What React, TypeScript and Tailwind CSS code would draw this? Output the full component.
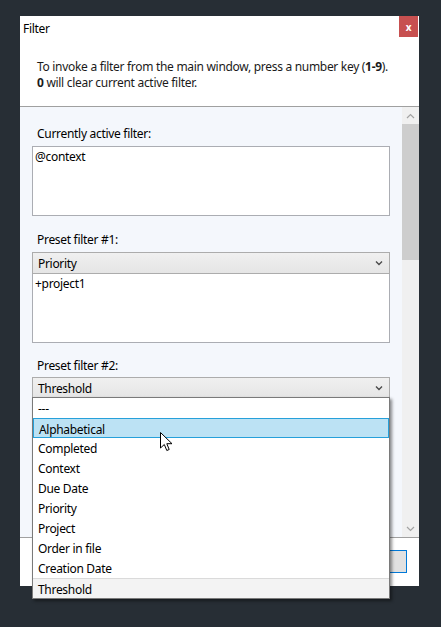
import React from 'react';

// ── Filter dialog with an open combo-box dropdown ──────────────
const FONT = { fontFamily: '"Noto Sans", "Open Sans", sans-serif' };

const OPTIONS = [
  '---',
  'Alphabetical',
  'Completed',
  'Context',
  'Due Date',
  'Priority',
  'Project',
  'Order in file',
  'Creation Date',
  'Threshold',
];

function Chevron() {
  return (
    <svg width="8" height="6" viewBox="0 0 8 6" className="shrink-0">
      <path d="M1 1.5 L4 4.5 L7 1.5" fill="none" stroke="#4a4a4a" strokeWidth="1.4" />
    </svg>
  );
}

function Combo({ value }: { value: string }) {
  return (
    <div className="flex h-[22px] items-center justify-between border border-[#acacac] bg-gradient-to-b from-[#f0f0f0] to-[#e5e5e5] pl-[5px] pr-[6px]">
      <span className="pt-[1px]">{value}</span>
      <Chevron />
    </div>
  );
}

function TextArea({ text, h, topBorder = true }: { text: string; h: string; topBorder?: boolean }) {
  return (
    <div
      className={[
        'border-x border-b border-[#abadb3] bg-white px-[2px] pt-[1px] leading-[18px]',
        topBorder ? 'border-t' : 'border-t-0',
        h,
      ].join(' ')}
    >
      {text}
    </div>
  );
}

function Cursor() {
  return (
    <svg width="14" height="21" viewBox="0 0 14 21" className="absolute left-[160px] top-[432px]">
      <path
        d="M0.5 0.5 L0.5 16 L4.3 12.5 L6.8 18.5 L9.2 17.5 L6.8 11.7 L12 11.7 Z"
        fill="#ffffff"
        stroke="#000000"
        strokeWidth="1"
      />
    </svg>
  );
}

export default function App() {
  return (
    <div
      className="relative h-[627px] w-[441px] overflow-hidden bg-[#272e35] pl-[20px] pt-[16px] text-[12px] tracking-[-0.3px] text-[#000]"
      style={FONT}
    >
      {/* Window */}
      <div className="flex h-[570px] w-[399px] flex-col bg-white">
        {/* Title bar */}
        <div className="flex h-[21px] items-start justify-between">
          <span className="pl-[3px] pt-[4px] leading-[18px]">Filter</span>
          <button className="mr-[1px] flex h-[21px] w-[19px] items-center justify-center bg-[#c75050] text-[10px] font-bold leading-none text-white">
            x
          </button>
        </div>

        {/* Instructions */}
        <div className="h-[70px] whitespace-nowrap border-b border-[#a0a0a0] px-[17px] pt-[22px] leading-[16px] text-[#1a1a1a]">
          <div>
            To invoke a filter from the main window, press a number key (<b>1-9</b>).
          </div>
          <div>
            <b>0</b> will clear current active filter.
          </div>
        </div>

        {/* Scrollable content */}
        <div className="flex h-[430px]">
          <div className="flex flex-1 flex-col bg-[#f4f7fc] px-[12px] pt-[19px]">
            <div className="pl-[5px] leading-[16px]">Currently active filter:</div>
            <div className="mt-[4px]">
              <TextArea text="@context" h="h-[70px]" />
            </div>

            <div className="mt-[16px] pl-[5px] leading-[16px]">Preset filter #1:</div>
            <div className="mt-[4px]">
              <Combo value="Priority" />
              <TextArea text="+project1" h="h-[69px]" topBorder={false} />
            </div>

            <div className="mt-[15px] pl-[5px] leading-[16px]">Preset filter #2:</div>
            <div className="mt-[3px]">
              <Combo value="Threshold" />
            </div>
          </div>

          {/* Scrollbar */}
          <div className="flex w-[17px] flex-col bg-[#f0f0f0]">
            <div className="flex h-[17px] items-center justify-center">
              <svg width="9" height="6" viewBox="0 0 9 6">
                <path d="M1 5 L4.5 1.5 L8 5" fill="none" stroke="#a3a3a3" strokeWidth="1.2" />
              </svg>
            </div>
            <div className="h-[136px] bg-[#cdcdcd]" />
            <div className="flex-1" />
            <div className="flex h-[17px] items-center justify-center">
              <svg width="9" height="6" viewBox="0 0 9 6">
                <path d="M1 1 L4.5 4.5 L8 1" fill="none" stroke="#a3a3a3" strokeWidth="1.2" />
              </svg>
            </div>
          </div>
        </div>

        {/* Footer */}
        <div className="flex flex-1 items-start justify-end border-t border-[#a0a0a0] bg-white pr-[12px] pt-[12px]">
          <div className="h-[23px] w-[75px] border border-[#0078d7] bg-[#e1e1e1]" />
        </div>
      </div>

      {/* Open dropdown */}
      <div className="absolute left-[32px] top-[397px] w-[358px] border border-[#7a7a7a] bg-white shadow-[2px_2px_3px_rgba(0,0,0,0.45)]">
        {OPTIONS.map((opt) => {
          const selected = opt === 'Alphabetical';
          const current = opt === 'Threshold';
          return (
            <div
              key={opt}
              className={[
                'h-[20px] pl-[5px] pt-[1px] leading-[19px]',
                selected ? 'border border-[#26a0da] bg-[#bce2f4] pl-[4px] pt-0 leading-[18px]' : '',
                current ? 'border-t border-[#dadada] bg-[#f3f3f3] pt-0' : '',
              ].join(' ')}
            >
              {opt}
            </div>
          );
        })}
      </div>

      <Cursor />
    </div>
  );
}
